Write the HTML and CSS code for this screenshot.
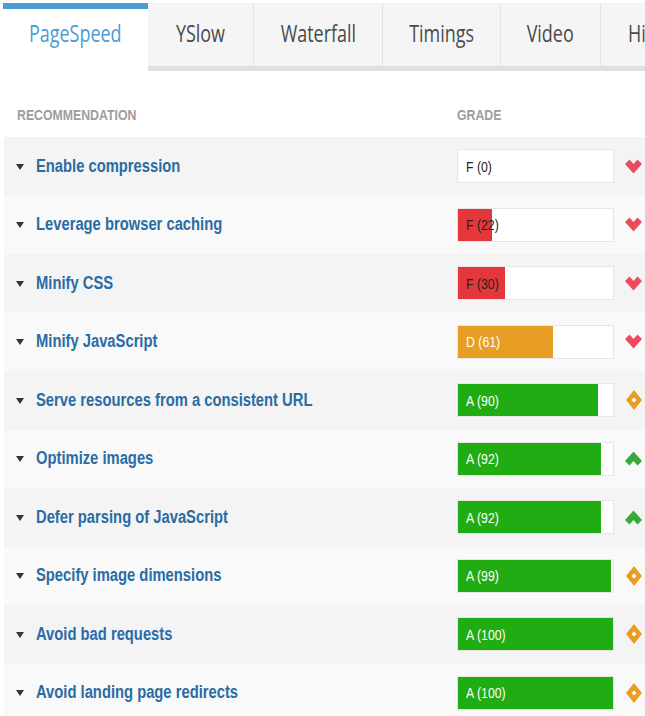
FILE: index.html
```html
<!DOCTYPE html>
<html>
<head>
<meta charset="utf-8">
<link rel="stylesheet" href="styles.css">
</head>
<body>
<div class="tabs">
  <div class="tab active w1"><span class="tt">PageSpeed</span></div>
  <div class="tab w2"><span class="tt">YSlow</span></div>
  <div class="tab w3"><span class="tt">Waterfall</span></div>
  <div class="tab w4"><span class="tt">Timings</span></div>
  <div class="tab w5"><span class="tt">Video</span></div>
  <div class="tab last"><span class="tt">History</span></div>
</div>

<div class="table">
  <div class="head">
    <div class="hcol first"><span class="nt">RECOMMENDATION</span></div>
    <div class="hcol"><span class="nt">GRADE</span></div>
  </div>

  <div class="row">
    <div class="name"><span class="tri"></span><span class="nt">Enable compression</span></div>
    <div class="grade"><div class="fill red" style="width:0%"></div><span class="label dark">F (0)</span></div>
    <svg class="icon" viewBox="0 0 17 15"><path class="down" d="M0 5 L4.5 0.5 L8.5 5 L12.5 0.5 L17 5 L8.5 14.5 Z"/></svg>
  </div>
  <div class="row">
    <div class="name"><span class="tri"></span><span class="nt">Leverage browser caching</span></div>
    <div class="grade"><div class="fill red" style="width:22%"></div><span class="label dark">F (22)</span></div>
    <svg class="icon" viewBox="0 0 17 15"><path class="down" d="M0 5 L4.5 0.5 L8.5 5 L12.5 0.5 L17 5 L8.5 14.5 Z"/></svg>
  </div>
  <div class="row">
    <div class="name"><span class="tri"></span><span class="nt">Minify CSS</span></div>
    <div class="grade"><div class="fill red" style="width:30%"></div><span class="label dark">F (30)</span></div>
    <svg class="icon" viewBox="0 0 17 15"><path class="down" d="M0 5 L4.5 0.5 L8.5 5 L12.5 0.5 L17 5 L8.5 14.5 Z"/></svg>
  </div>
  <div class="row">
    <div class="name"><span class="tri"></span><span class="nt">Minify JavaScript</span></div>
    <div class="grade"><div class="fill orange" style="width:61%"></div><span class="label">D (61)</span></div>
    <svg class="icon" viewBox="0 0 17 15"><path class="down" d="M0 5 L4.5 0.5 L8.5 5 L12.5 0.5 L17 5 L8.5 14.5 Z"/></svg>
  </div>
  <div class="row">
    <div class="name"><span class="tri"></span><span class="nt">Serve resources from a consistent URL</span></div>
    <div class="grade"><div class="fill green" style="width:90%"></div><span class="label">A (90)</span></div>
    <svg class="icon tall" viewBox="0 0 16 20"><path class="mid" d="M8 0 L16 10 L8 20 L0 10 Z"/><path class="dot" d="M8 7.5 L10.5 10 L8 12.5 L5.5 10 Z"/></svg>
  </div>
  <div class="row">
    <div class="name"><span class="tri"></span><span class="nt">Optimize images</span></div>
    <div class="grade"><div class="fill green" style="width:92%"></div><span class="label">A (92)</span></div>
    <svg class="icon" viewBox="0 0 17 15"><path class="up" d="M0 10 L8.5 0.5 L17 10 L12.5 14.5 L8.5 10 L4.5 14.5 Z"/></svg>
  </div>
  <div class="row">
    <div class="name"><span class="tri"></span><span class="nt">Defer parsing of JavaScript</span></div>
    <div class="grade"><div class="fill green" style="width:92%"></div><span class="label">A (92)</span></div>
    <svg class="icon" viewBox="0 0 17 15"><path class="up" d="M0 10 L8.5 0.5 L17 10 L12.5 14.5 L8.5 10 L4.5 14.5 Z"/></svg>
  </div>
  <div class="row">
    <div class="name"><span class="tri"></span><span class="nt">Specify image dimensions</span></div>
    <div class="grade"><div class="fill green" style="width:99%"></div><span class="label">A (99)</span></div>
    <svg class="icon tall" viewBox="0 0 16 20"><path class="mid" d="M8 0 L16 10 L8 20 L0 10 Z"/><path class="dot" d="M8 7.5 L10.5 10 L8 12.5 L5.5 10 Z"/></svg>
  </div>
  <div class="row">
    <div class="name"><span class="tri"></span><span class="nt">Avoid bad requests</span></div>
    <div class="grade"><div class="fill green" style="width:100%"></div><span class="label">A (100)</span></div>
    <svg class="icon tall" viewBox="0 0 16 20"><path class="mid" d="M8 0 L16 10 L8 20 L0 10 Z"/><path class="dot" d="M8 7.5 L10.5 10 L8 12.5 L5.5 10 Z"/></svg>
  </div>
  <div class="row">
    <div class="name"><span class="tri"></span><span class="nt">Avoid landing page redirects</span></div>
    <div class="grade"><div class="fill green" style="width:100%"></div><span class="label">A (100)</span></div>
    <svg class="icon tall" viewBox="0 0 16 20"><path class="mid" d="M8 0 L16 10 L8 20 L0 10 Z"/><path class="dot" d="M8 7.5 L10.5 10 L8 12.5 L5.5 10 Z"/></svg>
  </div>
</div>
</body>
</html>
```

FILE: styles.css
```css
html, body {
  margin: 0;
  padding: 0;
  background: #ffffff;
  overflow: hidden;
}
body {
  font-family: "Liberation Sans", Arial, sans-serif;
  width: 645px;
  height: 716px;
}

/* condensed text, as in the reference */
.nt, .tt, .label {
  display: inline-block;
  white-space: nowrap;
  transform: scaleX(0.82);
  transform-origin: left center;
}

/* Tabs */
.tabs {
  display: flex;
  margin: 3px 0 0 3px;
  white-space: nowrap;
  overflow: hidden;
}
.tab {
  box-sizing: border-box;
  flex: none;
  height: 68px;
  padding-top: 6px;
  padding-bottom: 10px;
  background: #f5f5f5;
  border-bottom: 5px solid #dfdfdf;
  border-right: 1px solid #e3e3e3;
  display: flex;
  align-items: center;
  justify-content: center;
  font-family: "Open Sans", "Liberation Sans", sans-serif;
  font-size: 23px;
  color: #4a4a4a;
}
.tab .tt {
  transform: scaleX(0.78);
  transform-origin: center center;
}
.tab.active {
  background: #ffffff;
  border-top: 6px solid #4b9ed3;
  border-bottom: 5px solid #ffffff;
  border-right: none;
  padding-top: 0;
  color: #4a9cd4;
}
.w1 { width: 145px; }
.w2 { width: 106px; }
.w3 { width: 129px; }
.w4 { width: 118px; }
.w5 { width: 100px; }
.tab.last {
  justify-content: flex-start;
  padding-left: 27px;
  width: 120px;
  border-right: none;
}
.tab.last .tt {
  transform-origin: left center;
}

/* Table */
.table {
  margin-left: 4px;
}
.head {
  display: grid;
  grid-template-columns: 453px 1fr;
  height: 66px;
  align-items: center;
  padding-top: 21px;
  box-sizing: border-box;
}
.hcol {
  font-size: 15px;
  font-weight: bold;
  color: #a19c9c;
}
.hcol.first {
  padding-left: 13px;
}

.row {
  display: grid;
  grid-template-columns: 453px 157px 1fr;
  align-items: center;
  height: 58.5px;
  background: #f4f4f4;
}
.row:nth-child(odd) {
  background: #f9f9f9;
}
.name {
  display: flex;
  align-items: center;
  padding-left: 12px;
  font-size: 18px;
  font-weight: bold;
  color: #2a6ca4;
}
.tri {
  flex: none;
  width: 0;
  height: 0;
  border-left: 4px solid transparent;
  border-right: 4px solid transparent;
  border-top: 6px solid #3b3233;
  margin-right: 12px;
  margin-top: 1px;
}
.grade {
  position: relative;
  box-sizing: border-box;
  height: 34px;
  background: #ffffff;
  border: 1px solid #e6e6e6;
  display: flex;
  align-items: center;
}
.fill {
  position: absolute;
  left: 0;
  top: 0;
  bottom: 0;
}
.fill.red { background: #e4373c; }
.fill.orange { background: #e89e24; }
.fill.green { background: #22ac13; }
.label {
  position: relative;
  margin-left: 8px;
  font-size: 15px;
  color: #ffffff;
}
.label.dark {
  color: #222222;
}
.icon {
  width: 17px;
  height: 15px;
  margin-left: 11px;
}
.icon.tall {
  width: 16px;
  height: 20px;
  margin-left: 12px;
}
.down { fill: #ea4b5d; }
.up { fill: #3ca83a; }
.mid { fill: #e89e24; }
.dot { fill: #ffffff; }
```
